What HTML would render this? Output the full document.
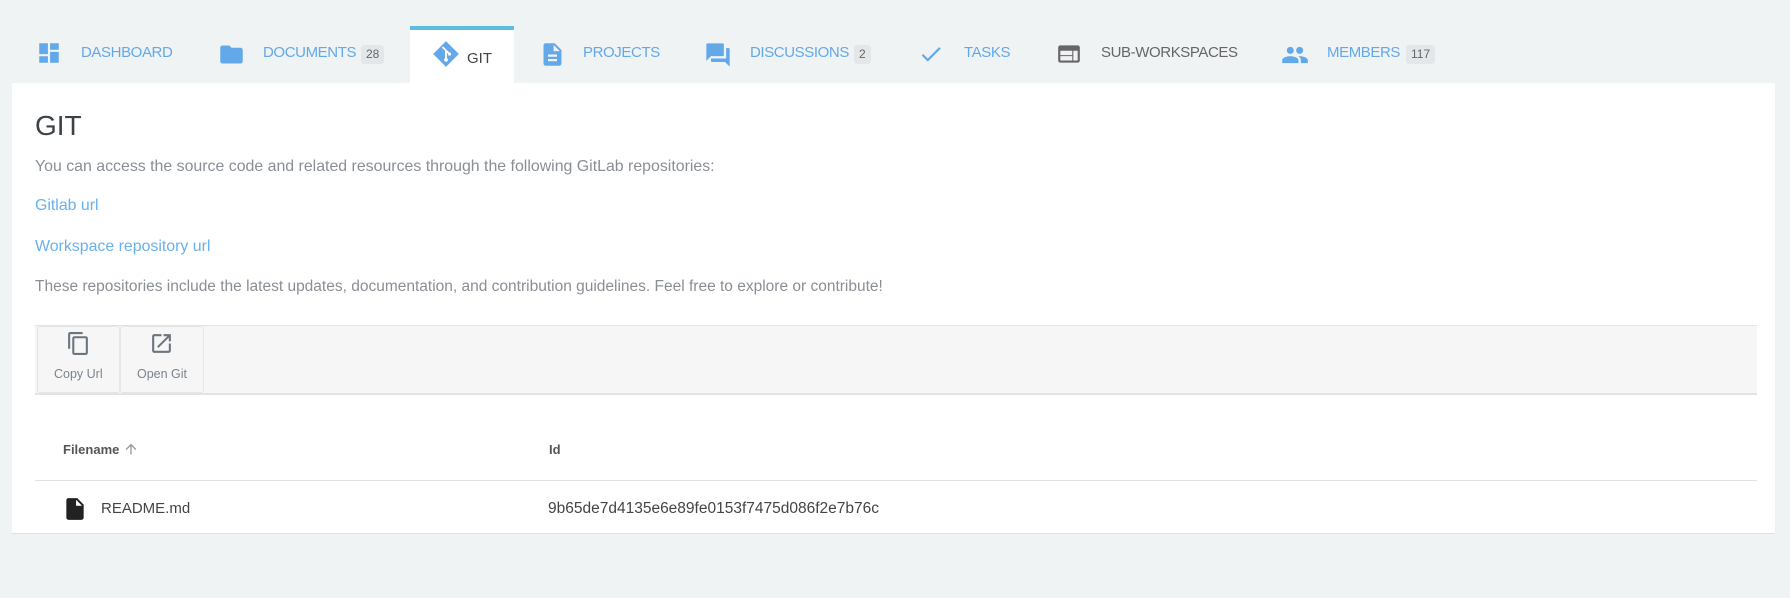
<!DOCTYPE html>
<html><head><meta charset="utf-8"><style>
*{margin:0;padding:0;box-sizing:border-box}
body{width:1790px;height:598px;background:#f0f3f4;font-family:"Liberation Sans",sans-serif;position:relative;overflow:hidden}
.a{position:absolute;white-space:nowrap}
.tab{font-size:15px;color:#63a9ea;top:44px;letter-spacing:-0.4px}
.badge{position:absolute;top:45px;height:19px;background:#e4e7e9;border-radius:3px;color:#666;font-size:12px;line-height:19px;padding:0 5px}
.ico{position:absolute;top:41px}
.p{font-size:15.9px;color:#8a8f96}
.l{font-size:15.9px;color:#6ab0ee}
</style></head><body>
<div class="a" style="left:12px;top:83px;width:1763px;height:451px;background:#fff;border-bottom:1px solid #dde1e3"></div>
<div class="a" style="left:410px;top:26px;width:104px;height:58px;background:#fff;border-top:4px solid #5bbde0"></div>

<svg class="ico" style="left:36px;top:40px" width="26" height="26" viewBox="0 0 24 24"><path fill="#63a9ea" d="M3 13h8V3H3v10zm0 8h8v-6H3v6zm10 0h8V11h-8v10zm0-18v6h8V3h-8z"/></svg>
<div class="a tab" style="left:81px">DASHBOARD</div>
<svg class="ico" style="left:218px" width="27" height="27" viewBox="0 0 24 24"><path fill="#63a9ea" d="M10 4H4c-1.1 0-2 .9-2 2v12c0 1.1.9 2 2 2h16c1.1 0 2-.9 2-2V8c0-1.1-.9-2-2-2h-8l-2-2z"/></svg>
<div class="a tab" style="left:263px">DOCUMENTS</div>
<div class="badge" style="left:361px">28</div>
<svg class="ico" style="left:432px;top:40px" width="28" height="28" viewBox="0 0 24 24"><path fill="#63a9ea" d="M12 1L1 12l11 11 11-11L12 1z"/><path stroke="#fff" stroke-width="1.6" fill="none" d="M9 6l3 3v8M12 9l3 3"/><circle cx="12" cy="17" r="1.6" fill="#fff"/><circle cx="15" cy="12" r="1.4" fill="#fff"/></svg>
<div class="a" style="left:467px;top:50px;font-size:15px;color:#444">GIT</div>
<svg class="ico" style="left:539px" width="27" height="27" viewBox="0 0 24 24"><path fill="#63a9ea" d="M14 2H6c-1.1 0-2 .9-2 2v16c0 1.1.9 2 2 2h12c1.1 0 2-.9 2-2V8l-6-6zm2 16H8v-2h8v2zm0-4H8v-2h8v2zm-3-5V3.5L18.5 9H13z"/></svg>
<div class="a tab" style="left:583px">PROJECTS</div>
<svg class="ico" style="left:704px" width="28" height="28" viewBox="0 0 24 24"><path fill="#63a9ea" d="M21 6h-2v9H6v2c0 .55.45 1 1 1h11l4 4V7c0-.55-.45-1-1-1zm-4 6V3c0-.55-.45-1-1-1H3c-.55 0-1 .45-1 1v14l4-4h10c.55 0 1-.45 1-1z"/></svg>
<div class="a tab" style="left:750px">DISCUSSIONS</div>
<div class="badge" style="left:854px">2</div>
<svg class="ico" style="left:918px" width="26" height="26" viewBox="0 0 24 24"><path fill="#63a9ea" d="M9 16.2L4.8 12l-1.4 1.4L9 19 21 7l-1.4-1.4L9 16.2z"/></svg>
<div class="a tab" style="left:964px">TASKS</div>
<svg class="ico" style="left:1056px" width="26" height="26" viewBox="0 0 24 24"><path fill="#666" d="M20 4H4c-1.1 0-2 .9-2 2v12c0 1.1.9 2 2 2h16c1.1 0 2-.9 2-2V6c0-1.1-.9-2-2-2zm-5 14H4v-4h11v4zm0-5H4V9h11v4zm5 5h-4V9h4v9z"/></svg>
<div class="a tab" style="left:1101px;color:#666">SUB-WORKSPACES</div>
<svg class="ico" style="left:1281px" width="28" height="28" viewBox="0 0 24 24"><path fill="#63a9ea" d="M16 11c1.66 0 2.99-1.34 2.99-3S17.66 5 16 5c-1.66 0-3 1.340-3 3s1.34 3 3 3zm-8 0c1.66 0 2.99-1.34 2.99-3S9.66 5 8 5C6.340 5 5 6.34 5 8s1.34 3 3 3zm0 2c-2.33 0-7 1.17-7 3.5V19h14v-2.5c0-2.33-4.67-3.5-7-3.5zm8 0c-.29 0-.62.02-.97.05 1.16.84 1.97 1.97 1.97 3.45V19h6v-2.5c0-2.33-4.67-3.5-7-3.5z"/></svg>
<div class="a tab" style="left:1327px">MEMBERS</div>
<div class="badge" style="left:1406px">117</div>

<div class="a" style="left:35px;top:110px;font-size:28px;color:#3c4248">GIT</div>
<div class="a p" style="left:35px;top:158px">You can access the source code and related resources through the following GitLab repositories:</div>
<div class="a l" style="left:35px;top:197px">Gitlab url</div>
<div class="a l" style="left:35px;top:238px">Workspace repository url</div>
<div class="a p" style="left:35px;top:278px;font-size:15.5px">These repositories include the latest updates, documentation, and contribution guidelines. Feel free to explore or contribute!</div>

<div class="a" style="left:35px;top:325px;width:1722px;height:70px;background:#f6f6f6;border-top:1px solid #e4e4e4;border-bottom:2px solid #e4e4e4"></div>
<div class="a" style="left:37px;top:326px;width:83px;height:67px;border:1px solid #e6e6e6;border-radius:3px"></div>
<div class="a" style="left:120px;top:326px;width:84px;height:67px;border:1px solid #e6e6e6;border-radius:3px"></div>
<svg class="a" style="left:66px;top:331px" width="25" height="25" viewBox="0 0 24 24"><path fill="#6b7580" d="M16 1H4c-1.1 0-2 .9-2 2v14h2V3h12V1zm3 4H8c-1.1 0-2 .9-2 2v14c0 1.1.9 2 2 2h11c1.1 0 2-.9 2-2V7c0-1.1-.9-2-2-2zm0 16H8V7h11v14z"/></svg>
<div class="a" style="left:54px;top:367px;font-size:12.5px;color:#7b8390">Copy Url</div>
<svg class="a" style="left:149px;top:331px" width="25" height="25" viewBox="0 0 24 24"><path fill="#6b7580" d="M19 19H5V5h7V3H5a2 2 0 00-2 2v14a2 2 0 002 2h14c1.1 0 2-.9 2-2v-7h-2v7zM14 3v2h3.59l-9.83 9.83 1.41 1.41L19 6.41V10h2V3h-7z"/></svg>
<div class="a" style="left:137px;top:367px;font-size:12.5px;color:#7b8390">Open Git</div>

<div class="a" style="left:63px;top:442px;font-size:13px;font-weight:bold;color:#555">Filename</div>
<svg class="a" style="left:123px;top:441px" width="16" height="16" viewBox="0 0 24 24"><path fill="#999" d="M4 12l1.41 1.41L11 7.830V20h2V7.83l5.58 5.59L20 12l-8-8-8 8z"/></svg>
<div class="a" style="left:549px;top:442px;font-size:13px;font-weight:bold;color:#555">Id</div>
<div class="a" style="left:35px;top:480px;width:1722px;height:1px;background:#e2e2e2"></div>
<svg class="a" style="left:62px;top:495px" width="26" height="28" viewBox="0 0 24 24"><path fill="#222" d="M6 2c-1.1 0-2 .9-2 2v16c0 1.1.9 2 2 2h12c1.1 0 2-.9 2-2V8l-6-6H6zm7 7V3.5L18.5 9H13z"/></svg>
<div class="a" style="left:101px;top:500px;font-size:15px;color:#444">README.md</div>
<div class="a" style="left:548px;top:500px;font-size:15.5px;color:#444">9b65de7d4135e6e89fe0153f7475d086f2e7b76c</div>
<div class="a" style="left:35px;top:533px;width:1722px;height:1px;background:#e2e2e2"></div>
</body></html>
